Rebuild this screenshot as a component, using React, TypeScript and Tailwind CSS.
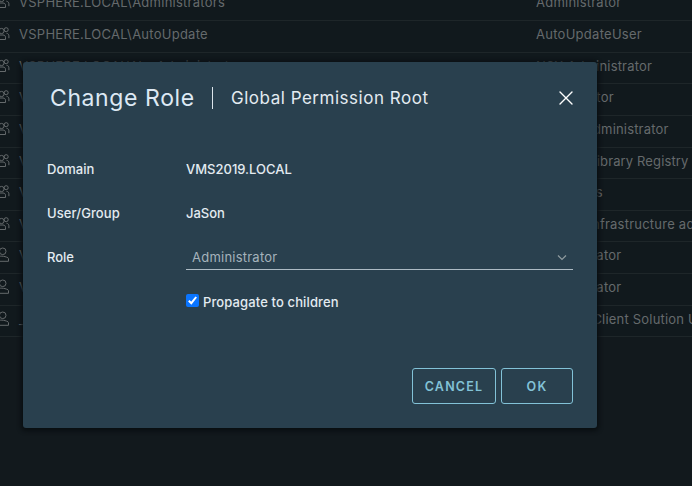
import React from "react";

type Row = { user: string; role: string; group: boolean; track: string };

const rows: Row[] = [
  { user: "VSPHERE.LOCAL\\Administrators", role: "Administrator", group: true, track: "tracking-[0.23px]" },
  { user: "VSPHERE.LOCAL\\AutoUpdate", role: "AutoUpdateUser", group: true, track: "tracking-[0.27px]" },
  { user: "VSPHERE.LOCAL\\NsxAdministrators", role: "NSX Administrator", group: true, track: "tracking-[0.18px]" },
  { user: "VSPHERE.LOCAL\\NsxAuditors", role: "NSX Auditor", group: true, track: "tracking-[0.25px]" },
  { user: "VSPHERE.LOCAL\\NsxViAdministrators", role: "NSX VI Administrator", group: true, track: "tracking-[0.17px]" },
  { user: "VSPHERE.LOCAL\\RegistryAdministrators", role: "Content Library Registry", group: true, track: "tracking-[0.13px]" },
  { user: "VSPHERE.LOCAL\\SyncUsers", role: "SyncUsers", group: true, track: "tracking-[0px]" },
  { user: "VSPHERE.LOCAL\\TrustedAdmins", role: "Trusted Infrastructure administrator", group: true, track: "tracking-[0.23px]" },
  { user: "VSPHERE.LOCAL\\Administrator", role: "Administrator", group: false, track: "tracking-[0.23px]" },
  { user: "VSPHERE.LOCAL\\vpxd-extension", role: "Administrator", group: false, track: "tracking-[0.23px]" },
  { user: "_vsphere-webclient", role: "vSphere Client Solution User", group: false, track: "tracking-[0.2px]" },
];

function PrincipalIcon({ group }: { group: boolean }) {
  return group ? (
    <svg width="15" height="16" viewBox="0 0 15 16" fill="none" stroke="currentColor" strokeWidth="1" className="shrink-0">
      <circle cx="10.200" cy="3.700" r="2" />
      <circle cx="5.500" cy="5" r="2.600" />
      <path d="M9.500 13.500V11.200c0-1.300-1-2.200-2.500-2.200H3M9.500 13.500H0M10.500 7.300c1.600.2 2.400 1.200 2.400 2.500v2.400" />
    </svg>
  ) : (
    <svg width="15" height="16" viewBox="0 0 15 16" fill="none" stroke="currentColor" strokeWidth="1" className="shrink-0">
      <circle cx="6.700" cy="4.300" r="3.300" />
      <path d="M0 10.500c3.500-2 8.200-1.700 12 .3.400.3.500.6.500 1v2.500H0" />
    </svg>
  );
}

export default function App() {
  return (
    <div className="relative h-[486px] w-[692px] overflow-hidden bg-[#12191d] font-['Inter',sans-serif] text-[13px]">
      <div className="-mt-[10.6px] text-[#656a6c]">
        {rows.map((r, i) => (
          <div key={i} className="flex h-[31.640px] border-b border-[#1e2629] bg-[#11191d] pt-[5px] whitespace-nowrap">
            <div className="-ml-1 w-[23px] shrink-0">
              <PrincipalIcon group={r.group} />
            </div>
            <div className="w-[517px] shrink-0 leading-4 tracking-[0.26px]">{r.user}</div>
            <div className={`shrink-0 leading-4 ${r.track}`}>{r.role}</div>
          </div>
        ))}
      </div>

      <div role="dialog" className="absolute top-[62px] left-[23px] flex h-[366px] w-[574px] flex-col rounded-[3px] bg-[#29404e] text-[#e3ebf1] shadow-[0_1px_4px_2px_#090e11]">
        <header className="flex h-[72px] items-center pr-[23px] pl-[27px]">
          <h1 className="w-[162px] text-[23px] tracking-[0.6px] whitespace-nowrap text-[#dde9f4]">Change Role</h1>
          <span className="h-[22px] w-px bg-[#dce5eb]" />
          <h2 className="mt-px ml-[18px] text-[17px] tracking-[0.52px] whitespace-nowrap">Global Permission Root</h2>
          <svg className="ml-auto" width="16" height="16" viewBox="0 0 16 16" fill="none" stroke="#fff" strokeWidth="1.400" strokeLinecap="round">
            <path d="M2 2l12 12M14 2L2 14" />
          </svg>
        </header>

        <div className="px-6 pt-[14px]">
          <div className="flex h-11 items-center font-medium">
            <span className="w-[139px]">Domain</span>
            <span>VMS2019.LOCAL</span>
          </div>
          <div className="flex h-11 items-center font-medium">
            <span className="w-[139px] tracking-[0.1px]">User/Group</span>
            <span>JaSon</span>
          </div>
          <div className="flex h-11 items-center">
            <span className="w-[139px] font-medium">Role</span>
            <div className="flex h-6 flex-1 items-center border-b border-[#adbbc4] pr-1.5 pl-1.5 text-[#a5b3bc]">
              <span className="tracking-[0.23px]">Administrator</span>
              <svg className="ml-auto" width="10" height="8" viewBox="0 0 10 8" fill="none" stroke="#8f9b9f" strokeWidth="1.200">
                <path d="M1 1.500L5 5.500L9 1.500" />
              </svg>
            </div>
          </div>
          <div className="flex h-11 items-center pl-[139px] font-medium">
            <span className="-mt-[3px] flex h-[13px] w-[13px] items-center justify-center rounded-[2px] bg-[#0a75ff]">
              <svg width="13" height="13" viewBox="0 0 13 13" fill="none" stroke="#fff" strokeWidth="2">
                <path d="M2.800 6.700L5.300 9.200L10.200 3" />
              </svg>
            </span>
            <span className="mt-px ml-1 tracking-[0.12px]">Propagate to children</span>
          </div>
        </div>

        <footer className="mt-auto flex justify-end gap-[5px] pr-6 pb-6 text-[12.500px] font-semibold tracking-[1.200px] text-[#82c2d7]">
          <button className="h-9 w-[84px] rounded-[3px] border border-[#82c2d7] pt-[2px]">CANCEL</button>
          <button className="h-9 w-[72px] rounded-[3px] border border-[#82c2d7] pt-[2px]">OK</button>
        </footer>
      </div>
    </div>
  );
}
